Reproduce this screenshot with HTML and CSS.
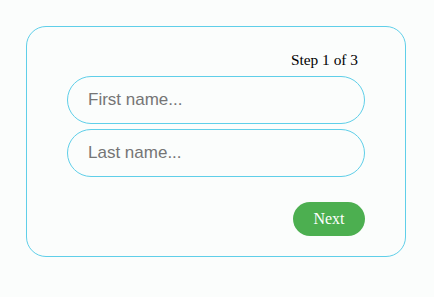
FILE: index.html
```html
<!DOCTYPE html>
<html>
<head>
<meta charset="utf-8">
<link rel="stylesheet" href="styles.css">
</head>
<body>
<div class="card">
  <div class="step">Step 1 of 3</div>
  <div class="fields">
    <input class="field" type="text" placeholder="First name...">
    <input class="field" type="text" placeholder="Last name...">
  </div>
  <div class="actions">
    <button class="next" type="button">Next</button>
  </div>
</div>
</body>
</html>
```

FILE: styles.css
```css
html, body {
  margin: 0;
  padding: 0;
  background: #fbfdfc;
}
body {
  padding: 26px 0 0 26px;
  font-family: "Liberation Serif", serif;
}
.card {
  box-sizing: border-box;
  width: 380px;
  height: 231px;
  border: 1px solid #5fcfe9;
  border-radius: 20px;
  padding: 23px 40px 0 40px;
}
.step {
  text-align: right;
  font-size: 15.4px;
  line-height: 20px;
  padding-right: 7px;
}
.fields {
  display: flex;
  flex-direction: column;
  gap: 5px;
  margin-top: 6px;
}
.field {
  box-sizing: border-box;
  width: 298px;
  height: 48px;
  border: 1px solid #5fcfe9;
  border-radius: 24px;
  padding: 0 20px;
  font-family: "Liberation Sans", Arial, sans-serif;
  font-size: 17px;
  background: #fbfdfc;
  outline: none;
  margin: 0;
}
.field::placeholder {
  color: #757575;
}
.actions {
  display: flex;
  justify-content: flex-end;
  margin-top: 25px;
}
.next {
  width: 72px;
  height: 34px;
  border: none;
  border-radius: 17px;
  background: #4caf50;
  color: #fff;
  font-family: "Liberation Serif", serif;
  font-size: 16px;
  padding: 0;
}
```
